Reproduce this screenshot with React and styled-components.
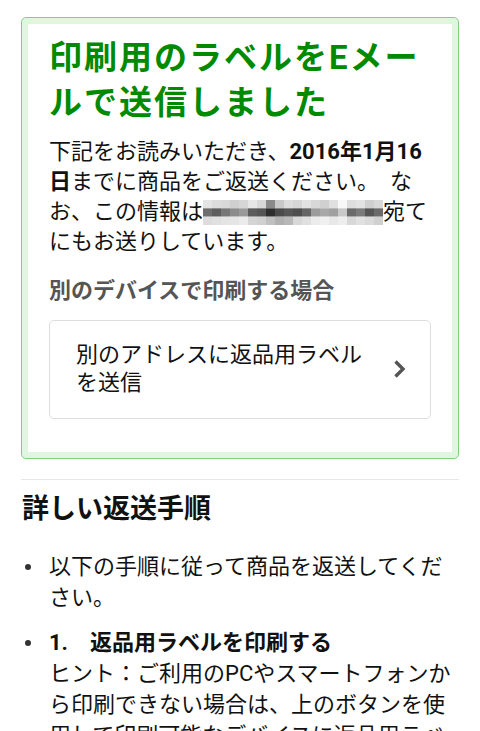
import React from 'react'
import styled, { createGlobalStyle } from 'styled-components'

const GlobalStyle = createGlobalStyle`
  html, body {
    margin: 0;
    padding: 0;
    background: #fff;
  }
  body {
    font-family: Roboto, "Noto Sans CJK JP", "Noto Sans", sans-serif;
    color: #111;
  }
`;

const Page = styled.div`
  padding: 17px 21px 0;
`;

const SuccessBox = styled.div`
  border: 1px solid #86cc86;
  border-radius: 5px;
  box-shadow: inset 0 0 0 6px #e1f6e1;
  padding: 17px 27px 39px;
`;

const Title = styled.h1`
  margin: 0;
  font-size: 33px;
  line-height: 45px;
  font-weight: 700;
  color: #008a00;
  letter-spacing: 2px;
`;

const Body = styled.p`
  margin: 12px 0 0;
  font-size: 22px;
  line-height: 30px;
  color: #111;
`;

const Strong = styled.b`
  font-weight: 700;
`;

const Mosaic = styled.svg`
  display: inline-block;
  vertical-align: -6px;
`;

const SubHeading = styled.h3`
  margin: 19px 0 0;
  font-size: 22px;
  line-height: 30px;
  font-weight: 700;
  color: #555;
`;

const LinkButton = styled.div`
  margin-top: 14px;
  display: flex;
  align-items: center;
  border: 1px solid #ddd;
  border-radius: 5px;
  padding: 20px 24px 21px 26px;
  gap: 23px;
`;

const ButtonText = styled.span`
  flex: 1;
  font-size: 22px;
  line-height: 28px;
  color: #111;
`;

const Divider = styled.hr`
  margin: 20px 0 0;
  border: 0;
  border-top: 1px solid #e7e7e7;
`;

const SectionTitle = styled.h2`
  margin: 12px 0 0 1px;
  font-size: 27px;
  line-height: 34px;
  font-weight: 700;
  color: #111;
`;

const Steps = styled.ul`
  list-style: none;
  margin: 25px 0 0;
  padding: 0;
  display: flex;
  flex-direction: column;
  gap: 14px;
`;

const Step = styled.li`
  display: flex;
  font-size: 22px;
  line-height: 31px;
  color: #111;
`;

const Bullet = styled.span`
  flex: 0 0 28px;
  display: flex;
  height: 31px;
  align-items: center;
  &::before {
    content: '';
    width: 6px;
    height: 6px;
    margin-left: 4px;
    border-radius: 50%;
    background: #333;
  }
`;

const StepText = styled.div`
  flex: 1;
`;

const StepTitle = styled.div`
  font-weight: 700;
`;

const mosaic = [
  ['#e4e4e4', '#dcdcdc', '#d8d8d8', '#cfcfcf', '#d6d6d6', '#e6e6e6', '#d8d8d8', '#8a8a8a', '#c8c8c8', '#dcdcdc', '#d6d6d6', '#e2e2e2', '#d8d8d8', '#d0d0d0', '#e0e0e0', '#f8f8f8', '#dedede', '#e2e2e2', '#cfcfcf', '#d8d8d8'],
  ['#6e6e6e', '#5e5e5e', '#777777', '#8c8c8c', '#9a9a9a', '#5c5c5c', '#555555', '#2e2e2e', '#4a4a4a', '#555555', '#4e4e4e', '#666666', '#9c9c9c', '#a8a8a8', '#a0a0a0', '#c8c8c8', '#6a6a6a', '#7a7a7a', '#555555', '#6a6a6a'],
  ['#dcdcdc', '#e0e0e0', '#e4e4e4', '#e6e6e6', '#ebebeb', '#d4d4d4', '#d0d0d0', '#c0c0c0', '#b0b0b0', '#b8b8b8', '#d8d8d8', '#e0e0e0', '#ececec', '#f0f0f0', '#e8e8e8', '#eeeeee', '#d8d8d8', '#e0e0e0', '#dadada', '#d0d0d0'],
];

const BlurredEmail = () => (
  <Mosaic width="180" height="25" viewBox="0 0 180 25">
    {mosaic.map((row, r) =>
      row.map((c, i) => (
        <rect key={`${r}-${i}`} x={i * 9} y={r * 8.33} width="9" height="8.4" fill={c} />
      ))
    )}
  </Mosaic>
);

const Chevron = () => (
  <svg width="13" height="20" viewBox="0 0 13 20">
    <path d="M2.5 2.5 L10 10 L2.5 17.5" fill="none" stroke="#555" strokeWidth="3.4" />
  </svg>
);

export default function App() {
  return (
    <>
      <GlobalStyle />
      <Page>
        <SuccessBox>
          <Title>印刷用のラベルをEメー<br />ルで送信しました</Title>
          <Body>
            下記をお読みいただき、<Strong>2016年1月16日</Strong>までに商品をご返送ください。　なお、この情報は<BlurredEmail />宛てにもお送りしています。
          </Body>
          <SubHeading>別のデバイスで印刷する場合</SubHeading>
          <LinkButton>
            <ButtonText>別のアドレスに返品用ラベルを送信</ButtonText>
            <Chevron />
          </LinkButton>
        </SuccessBox>
        <Divider />
        <SectionTitle>詳しい返送手順</SectionTitle>
        <Steps>
          <Step>
            <Bullet />
            <StepText>以下の手順に従って商品を返送してください。</StepText>
          </Step>
          <Step>
            <Bullet />
            <StepText>
              <StepTitle>1.　返品用ラベルを印刷する</StepTitle>
              ヒント：ご利用のPCやスマートフォンから印刷できない場合は、上のボタンを使用して印刷可能なデバイスに返品用ラベルを送信してください。
            </StepText>
          </Step>
        </Steps>
      </Page>
    </>
  )
}
